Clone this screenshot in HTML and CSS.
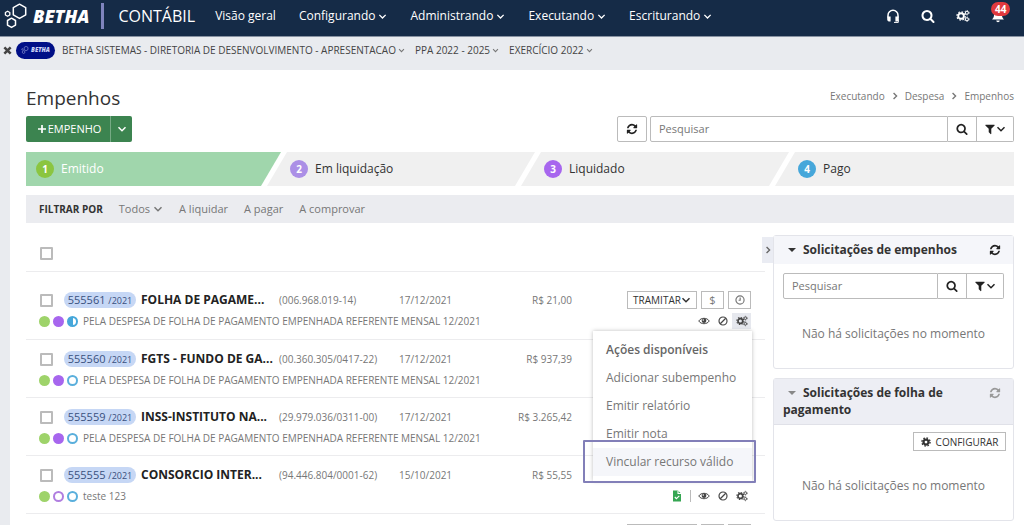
FILE: index.html
```html
<!DOCTYPE html>
<html lang="pt-BR">
<head>
<meta charset="utf-8">
<title>Empenhos</title>
<link rel="stylesheet" href="styles.css">
</head>
<body>
<svg class="sprite" aria-hidden="true">
  <symbol id="chevron" viewBox="0 0 10 10"><path d="M1.5 3.2 5 6.7 8.5 3.2" fill="none" stroke="currentColor" stroke-width="1.5"/></symbol>
  <symbol id="next" viewBox="0 0 10 10"><path d="M3.2 1.2 7 5 3.2 8.800" fill="none" stroke="currentColor" stroke-width="1.7"/></symbol>
  <symbol id="search" viewBox="0 0 1792 1792"><path fill="currentColor" d="M1216 832q0-185-131.500-316.500t-316.500-131.500-316.500 131.500-131.500 316.500 131.500 316.500 316.500 131.500 316.500-131.500 131.500-316.500zm512 832q0 52-38 90t-90 38q-54 0-90-38l-343-342q-179 124-399 124-143 0-273.500-55.500t-225-150-150-225-55.500-273.500 55.500-273.500 150-225 225-150 273.500-55.500 273.500 55.500 225 150 150 225 55.500 273.500q0 220-124 399l343 343q37 37 37 90z"/></symbol>
  <symbol id="refresh" viewBox="0 0 1792 1792"><path fill="currentColor" d="M1639 1056q0 5-1 7-64 268-268 434.500t-478 166.500q-146 0-282.500-55t-243.500-157l-129 129q-19 19-45 19t-45-19-19-45v-448q0-26 19-45t45-19h448q26 0 45 19t19 45-19 45l-137 137q71 66 161 102t187 36q134 0 250-65t186-179q11-17 53-117 8-23 30-23h192q13 0 22.500 9.500t9.500 22.500zm25-800v448q0 26-19 45t-45 19h-448q-26 0-45-19t-19-45 19-45l138-138q-148-137-349-137-134 0-250 65t-186 179q-11 17-53 117-8 23-30 23h-199q-13 0-22.500-9.500t-9.500-22.500v-7q65-268 270-434.500t480-166.500q146 0 284 55.500t245 156.500l130-129q19-19 45-19t45 19 19 45z"/></symbol>
  <symbol id="filter" viewBox="0 0 1792 1792"><path fill="currentColor" d="M1595 295q17 41-14 70l-493 493v742q0 42-39 59-13 5-25 5-27 0-45-19l-256-256q-19-19-19-45v-486l-493-493q-31-29-14-70 17-39 59-39h1280q42 0 59 39z"/></symbol>
  <symbol id="gears" viewBox="0 0 18 16"><g fill="none" stroke="currentColor"><circle cx="6.500" cy="8" r="3.600" stroke-width="2.400"/><circle cx="6.500" cy="8" r="5.300" stroke-width="1.600" stroke-dasharray="2.080 2.080"/><circle cx="14" cy="3.800" r="1.900" stroke-width="1.300"/><circle cx="14" cy="3.800" r="2.900" stroke-width="1" stroke-dasharray="1.520 1.520"/><circle cx="14" cy="12.200" r="1.900" stroke-width="1.300"/><circle cx="14" cy="12.200" r="2.900" stroke-width="1" stroke-dasharray="1.520 1.520"/></g></symbol>
  <symbol id="gear" viewBox="0 0 16 16"><g fill="none" stroke="currentColor"><circle cx="8" cy="8" r="4" stroke-width="3.600"/><circle cx="8" cy="8" r="6.500" stroke-width="2.200" stroke-dasharray="2.550 2.550"/></g></symbol>
  <symbol id="eye" viewBox="0 0 16 12"><path d="M1 6C4 1.200 12 1.200 15 6 12 10.800 4 10.800 1 6Z" fill="none" stroke="currentColor" stroke-width="1.300"/><circle cx="8" cy="5.500" r="3.100" fill="currentColor"/><circle cx="7" cy="4.500" r="1" fill="#fff"/></symbol>
  <symbol id="ban" viewBox="0 0 12 12"><g fill="none" stroke="currentColor" stroke-width="1.400"><circle cx="6" cy="6" r="4.800"/><path d="M9.300 2.700 2.700 9.300"/></g></symbol>
  <symbol id="clock" viewBox="0 0 12 12"><g fill="none" stroke="currentColor" stroke-width="1.400"><circle cx="6" cy="6" r="4.900"/><path d="M6.200 3v3.300H4.300"/></g></symbol>
  <symbol id="plus" viewBox="0 0 10 10"><path d="M5 1v8M1 5h8" stroke="currentColor" stroke-width="1.700"/></symbol>
  <symbol id="hexes" viewBox="0 0 24 26"><g fill="none" stroke="currentColor" stroke-linejoin="round"><path d="M15.500 1.200 21.700 4.600v7.200l-6.200 3.600-6.200-3.600V4.600Z" stroke-width="1.500"/><path d="M7.500 15.200l4 2.300v4.600l-4 2.300-4-2.300v-4.600Z" stroke-width="1.500"/><path d="M3.600 8.200l2.200 1.300V12l-2.200 1.300L1.400 12V9.500Z" stroke-width="1.300"/></g></symbol>
  <symbol id="headset" viewBox="0 0 14 14"><path d="M2 8.500V6.300a5 5 0 0 1 10 0v2.200" fill="none" stroke="currentColor" stroke-width="1.500"/><path d="M1.200 7.500h3.400v5H2.700Q1.200 12 1.200 10.500ZM12.800 7.500H9.400v5h1.900Q12.800 12 12.800 10.500Z" fill="currentColor"/><path d="M12.300 10.500v2.900H8" fill="none" stroke="currentColor" stroke-width="1"/></symbol>
  <symbol id="bell" viewBox="0 0 14 16"><path d="M7 1c3 0 4.500 2.300 4.500 5 0 4 1.500 4.800 2.200 6H.3C1 10.800 2.500 10 2.500 6 2.500 3.300 4 1 7 1ZM5 13h4a2 2 0 0 1-4 0Z" fill="currentColor"/></symbol>
  <symbol id="close" viewBox="0 0 10 10"><path d="m1.500 1.500 7 7m0-7-7 7" stroke="currentColor" stroke-width="2.800"/></symbol>
  <symbol id="filecheck" viewBox="0 0 10 12"><path d="M1 .5h5L9 3.500v8H1Z" fill="currentColor"/><path d="M6 .5v3h3M2.800 7l1.600 1.700L7.300 5.800" fill="none" stroke="#fff" stroke-width="1.100"/></symbol>
</svg>

<header class="topbar">
  <a class="brand" href="#"><svg class="brand-mark"><use href="#hexes"/></svg><span class="brand-name">BETHA</span></a>
  <span class="product">CONTÁBIL</span>
  <nav class="menu">
    <a href="#">Visão geral</a>
    <a href="#">Configurando <svg class="chev"><use href="#chevron"/></svg></a>
    <a href="#">Administrando <svg class="chev"><use href="#chevron"/></svg></a>
    <a href="#">Executando <svg class="chev"><use href="#chevron"/></svg></a>
    <a href="#">Escriturando <svg class="chev"><use href="#chevron"/></svg></a>
  </nav>
  <div class="tools">
    <button class="plain" aria-label="Suporte"><svg class="i14"><use href="#headset"/></svg></button>
    <button class="plain" aria-label="Buscar"><svg class="i14"><use href="#search"/></svg></button>
    <button class="plain" aria-label="Configurações"><svg class="i14"><use href="#gears"/></svg></button>
    <button class="plain bell" aria-label="Notificações"><svg class="i14"><use href="#bell"/></svg><span class="badge">44</span></button>
  </div>
</header>

<div class="context">
  <button class="plain" aria-label="Fechar"><svg class="i9"><use href="#close"/></svg></button>
  <span class="entity"><svg class="entity-mark"><use href="#hexes"/></svg>BETHA</span>
  <a class="first" href="#">BETHA SISTEMAS - DIRETORIA DE DESENVOLVIMENTO - APRESENTACAO<svg class="chev-sm"><use href="#chevron"/></svg></a>
  <a href="#">PPA 2022 - 2025<svg class="chev-sm"><use href="#chevron"/></svg></a>
  <a href="#">EXERCÍCIO 2022<svg class="chev-sm"><use href="#chevron"/></svg></a>
</div>

<main class="page">
  <div class="heading">
    <h1>Empenhos</h1>
    <nav class="crumbs">
      <a href="#">Executando</a><svg class="i8"><use href="#next"/></svg><a href="#">Despesa</a><svg class="i8"><use href="#next"/></svg><a href="#">Empenhos</a>
    </nav>
  </div>

  <div class="toolbar">
    <div class="split">
      <button class="new"><svg class="i10"><use href="#plus"/></svg>EMPENHO</button>
      <button class="new-more" aria-label="Mais opções"><svg class="i10"><use href="#chevron"/></svg></button>
    </div>
    <button class="box reload" aria-label="Atualizar"><svg class="i12"><use href="#refresh"/></svg></button>
    <div class="search">
      <input type="text" placeholder="Pesquisar" aria-label="Pesquisar">
      <button class="go" aria-label="Buscar"><svg class="i12"><use href="#search"/></svg></button>
      <button class="flt" aria-label="Filtrar"><svg class="i12"><use href="#filter"/></svg><svg class="i10"><use href="#chevron"/></svg></button>
    </div>
  </div>

  <ol class="steps">
    <li class="active"><span class="num n1">1</span>Emitido</li>
    <li><span class="num n2">2</span>Em liquidação</li>
    <li><span class="num n3">3</span>Liquidado</li>
    <li><span class="num n4">4</span>Pago</li>
  </ol>

  <div class="filters">
    <strong>FILTRAR POR</strong>
    <a href="#">Todos <svg class="i10"><use href="#chevron"/></svg></a>
    <a href="#">A liquidar</a>
    <a href="#">A pagar</a>
    <a href="#">A comprovar</a>
  </div>

  <div class="columns">
    <section class="list">
      <div class="select-all"><input type="checkbox" aria-label="Selecionar todos"></div>

      <article class="row opened">
        <div class="line">
          <input type="checkbox" aria-label="Selecionar 555561">
          <span class="pill">555561 <small>/2021</small></span>
          <strong class="name">FOLHA DE PAGAME...</strong>
          <span class="doc">(006.968.019-14)</span>
          <span class="date">17/12/2021</span>
          <span class="value">R$ 21,00</span>
          <div class="buttons"><button class="act wide">TRAMITAR<svg class="i10"><use href="#chevron"/></svg></button><button class="act">$</button><button class="act" aria-label="Histórico"><svg class="i10"><use href="#clock"/></svg></button></div>
        </div>
        <div class="line sub">
          <span class="dots"><i class="dot green"></i><i class="dot purple"></i><i class="dot half"></i></span>
          <span class="desc">PELA DESPESA DE FOLHA DE PAGAMENTO EMPENHADA REFERENTE MENSAL 12/2021</span>
          <div class="icons"><button class="plain" aria-label="Ver"><svg class="i12"><use href="#eye"/></svg></button><button class="plain" aria-label="Anular"><svg class="i10"><use href="#ban"/></svg></button><button class="plain on" aria-label="Ações"><svg class="i12"><use href="#gears"/></svg></button></div>
          <div class="dropdown">
            <h2>Ações disponíveis</h2>
            <a href="#">Adicionar subempenho</a>
            <a href="#">Emitir relatório</a>
            <a href="#">Emitir nota</a>
            <a class="current" href="#">Vincular recurso válido</a>
          </div>
        </div>
      </article>

      <article class="row">
        <div class="line">
          <input type="checkbox" aria-label="Selecionar 555560">
          <span class="pill">555560 <small>/2021</small></span>
          <strong class="name">FGTS - FUNDO DE GA...</strong>
          <span class="doc">(00.360.305/0417-22)</span>
          <span class="date">17/12/2021</span>
          <span class="value">R$ 937,39</span>
        </div>
        <div class="line sub">
          <span class="dots"><i class="dot green"></i><i class="dot purple"></i><i class="dot blue-o"></i></span>
          <span class="desc">PELA DESPESA DE FOLHA DE PAGAMENTO EMPENHADA REFERENTE MENSAL 12/2021</span>
        </div>
      </article>

      <article class="row">
        <div class="line">
          <input type="checkbox" aria-label="Selecionar 555559">
          <span class="pill">555559 <small>/2021</small></span>
          <strong class="name">INSS-INSTITUTO NA...</strong>
          <span class="doc">(29.979.036/0311-00)</span>
          <span class="date">17/12/2021</span>
          <span class="value">R$ 3.265,42</span>
        </div>
        <div class="line sub">
          <span class="dots"><i class="dot green"></i><i class="dot purple"></i><i class="dot blue-o"></i></span>
          <span class="desc">PELA DESPESA DE FOLHA DE PAGAMENTO EMPENHADA REFERENTE MENSAL 12/2021</span>
        </div>
      </article>

      <article class="row">
        <div class="line">
          <input type="checkbox" aria-label="Selecionar 555555">
          <span class="pill">555555 <small>/2021</small></span>
          <strong class="name">CONSORCIO INTER...</strong>
          <span class="doc">(94.446.804/0001-62)</span>
          <span class="date">15/10/2021</span>
          <span class="value">R$ 55,55</span>
        </div>
        <div class="line sub">
          <span class="dots"><i class="dot green"></i><i class="dot purple-o"></i><i class="dot blue-o"></i></span>
          <span class="desc">teste 123</span>
          <div class="icons"><button class="plain file" aria-label="Documento"><svg class="i12"><use href="#filecheck"/></svg></button><button class="plain" aria-label="Ver"><svg class="i12"><use href="#eye"/></svg></button><button class="plain" aria-label="Anular"><svg class="i10"><use href="#ban"/></svg></button><button class="plain gears" aria-label="Ações"><svg class="i12"><use href="#gears"/></svg></button></div>
        </div>
      </article>

      <article class="row">
        <div class="line">
          <div class="buttons"><button class="act wide" aria-label="Tramitar"></button><button class="act" aria-label="Pagar"></button><button class="act" aria-label="Histórico"></button></div>
        </div>
      </article>
    </section>

    <aside class="side">
      <button class="collapse" aria-label="Recolher"><svg class="i8"><use href="#next"/></svg></button>
      <section class="panel">
        <header>
          <h2><span class="tri"></span>Solicitações de empenhos</h2>
          <button class="plain" aria-label="Atualizar"><svg class="i12"><use href="#refresh"/></svg></button>
        </header>
        <div class="search">
          <input type="text" placeholder="Pesquisar" aria-label="Pesquisar solicitações">
          <button class="go" aria-label="Buscar"><svg class="i12"><use href="#search"/></svg></button>
          <button class="flt" aria-label="Filtrar"><svg class="i12"><use href="#filter"/></svg><svg class="i10"><use href="#chevron"/></svg></button>
        </div>
        <p>Não há solicitações no momento</p>
      </section>
      <section class="panel muted">
        <header>
          <h2><span class="tri"></span>Solicitações de folha de pagamento</h2>
          <button class="plain" aria-label="Atualizar"><svg class="i12"><use href="#refresh"/></svg></button>
        </header>
        <button class="config"><svg class="i10"><use href="#gear"/></svg>CONFIGURAR</button>
        <p>Não há solicitações no momento</p>
      </section>
    </aside>
  </div>
</main>
</body>
</html>
```
FILE: styles.css
```css
* { box-sizing: border-box; }
body {
  margin: 0;
  height: 100vh;
  overflow: hidden;
  display: flex;
  flex-direction: column;
  background: #e9ebef;
  color: #777;
  font: 12px/16px "Open Sans", "Noto Sans", sans-serif;
}
a { color: inherit; text-decoration: none; }
button, input { font: inherit; color: inherit; margin: 0; }
button { display: flex; align-items: center; justify-content: center; padding: 0; background: #fff; border: 1px solid #bbb; }
h1, h2, p, ol { margin: 0; padding: 0; }
svg { flex: none; display: block; }
.sprite { position: absolute; width: 0; height: 0; }
.plain { border: 0; background: none; }
.i8 { width: 8px; height: 8px; }
.i9 { width: 9px; height: 9px; }
.i10 { width: 10px; height: 10px; }
.i12 { width: 12px; height: 12px; }
.i14 { width: 14px; height: 14px; }

.topbar {
  flex: none;
  height: 37px;
  display: flex;
  align-items: center;
  padding: 0 19px 4px 4px;
  background: #152b47;
  border-bottom: 1px solid #8792a2;
  color: #fff;
}
.brand { display: flex; align-items: center; gap: 5px; }
.brand-mark { width: 24px; height: 26px; }
.brand-name { font-size: 18px; font-weight: 800; font-style: italic; }
.product {
  margin-left: 12px;
  padding-left: 14px;
  border-left: 3px solid #7f84bd;
  font-size: 16px;
  line-height: 26px;
}
.menu { display: flex; gap: 23px; margin-left: 20px; }
.menu a { display: flex; align-items: center; gap: 3px; }
.chev { width: 9px; height: 9px; }
.tools { display: flex; align-items: center; gap: 21px; margin-left: auto; }
.bell { position: relative; }
.badge {
  position: absolute;
  left: 0;
  top: -7px;
  padding: 0 4px;
  border-radius: 8px;
  background: #e0393e;
  font-size: 10px;
  line-height: 14px;
  font-weight: 700;
}

.context {
  flex: none;
  height: 33px;
  display: flex;
  align-items: center;
  padding: 0 3px 7px;
  color: #444;
  font-size: 10px;
}
.context a { display: flex; align-items: center; gap: 2px; margin-right: 10px; }
.context .first { margin-left: 7px; }
.chev-sm { width: 7px; height: 7px; color: #777; }
.entity {
  display: flex;
  align-items: center;
  justify-content: center;
  gap: 2px;
  width: 39px;
  height: 17px;
  margin-left: 4px;
  border-radius: 9px;
  background: #000f87;
  color: #cdd3f5;
  font-size: 6px;
  font-weight: 800;
  font-style: italic;
}
.entity-mark { width: 8px; height: 8px; }

.page { flex: 1; min-height: 0; margin-left: 10px; padding: 16px 10px 0 16px; background: #fff; }
.heading { display: flex; justify-content: space-between; height: 24px; }
h1 { color: #333; font-size: 19px; font-weight: 400; line-height: 24px; }
.crumbs { display: flex; align-items: center; gap: 6px; height: 20px; font-size: 10px; }

.toolbar { display: flex; height: 26px; margin-top: 6px; }
.split { display: flex; }
.new, .new-more { border: 0; background: #3c8450; color: #fff; }
.new { gap: 1px; width: 84px; padding-left: 2px; border-radius: 2px 0 0 2px; font-size: 11px; }
.new-more { width: 22px; border-left: 1px solid #76aa84; border-radius: 0 2px 2px 0; }
.box { border-radius: 2px; color: #222; }
.reload { width: 30px; margin: 0 3px 0 auto; }
.search { display: flex; height: 26px; width: 364px; color: #222; }
.search input { flex: 1; min-width: 0; padding: 0 8px; border: 1px solid #bbb; border-radius: 2px 0 0 2px; font-size: 11px; }
.search input::placeholder { color: #777; opacity: 1; }
.go { width: 29px; border-left: 0; }
.flt { width: 37px; border-left: 0; border-radius: 0 2px 2px 0; }

.steps { display: grid; grid-template-columns: 254fr 254fr 254fr 226fr; margin-top: 10px; list-style: none; color: #333; }
.steps li {
  display: flex;
  align-items: center;
  gap: 7px;
  height: 34px;
  margin: 0 -1px 0 -13px;
  padding-left: 23px;
  background: #f0f0f0;
  clip-path: polygon(20px 0, 100% 0, calc(100% - 20px) 100%, 0 100%);
}
.steps .active { margin-left: 0; padding-left: 10px; background: #a0d6ac; color: #fff; clip-path: polygon(0 0, 100% 0, calc(100% - 20px) 100%, 0 100%); }
.steps li:last-child { margin-right: 0; clip-path: polygon(20px 0, 100% 0, 100% 100%, 0 100%); }
.num { width: 18px; border-radius: 50%; color: #fff; font-size: 10px; font-weight: 700; line-height: 18px; text-align: center; }
.n1 { background: #8bc540; }
.n2 { background: #ab8fe6; }
.n3 { background: #a766ee; }
.n4 { background: #46a7da; }

.filters { display: flex; align-items: center; gap: 16px; height: 28px; margin-top: 9px; padding-left: 13px; background: #ebecf0; font-size: 11px; }
.filters strong { color: #333; font-size: 10px; }
.filters a { display: flex; align-items: center; gap: 3px; }

.columns { display: flex; gap: 8px; padding-top: 12px; }
.list { flex: 1; min-width: 0; }
.select-all { display: flex; align-items: center; height: 36px; padding-left: 14px; }
input[type="checkbox"] { appearance: none; flex: none; width: 13px; height: 13px; border: 2px solid #bbb; border-radius: 1px; background: #fff; }
.row { padding: 10px 14px 9px; border-top: 1px solid #ececee; }
.row.opened { padding: 19px 14px 10px; }
.line { display: flex; align-items: center; height: 18px; font-size: 11px; }
.line input { margin-right: 11px; }
.pill { flex: none; width: 72px; height: 16px; margin-right: 5px; border-radius: 8px; background: #c6d7f5; color: #38507d; line-height: 15px; text-align: center; white-space: nowrap; }
.pill small { font-size: 9px; }
.name { flex: none; width: 138px; color: #222; font-size: 12px; white-space: nowrap; }
.doc { flex: none; width: 120px; font-size: 10px; }
.date { flex: none; width: 80px; font-size: 10px; }
.value { width: 93px; font-size: 10px; text-align: right; }
.buttons { display: flex; gap: 4px; margin-left: auto; }
.act { width: 23px; height: 18px; font-size: 11px; }
.wide { width: 70px; color: #333; font-size: 10px; }
.line.sub { position: relative; height: 16px; margin-top: 4px; font-size: 10px; }
.dots { display: flex; gap: 3px; margin: 0 5px 0 -1px; }
.dot { width: 11px; height: 11px; border-radius: 50%; }
.green { background: #9ed36a; }
.purple { background: #a766ee; }
.purple-o { border: 2px solid #b07ee0; }
.blue-o { border: 2px solid #5aafdc; }
.half { border: 2px solid #46a7da; background: linear-gradient(90deg, #46a7da 50%, #fff 50%); }
.icons { display: flex; gap: 0; margin-left: auto; color: #444; }
.icons .plain { width: 19px; height: 16px; }
.icons .on { background: #e6e8ee; }
.icons .file { width: 21px; height: 12px; margin: 2px 3px 0 0; padding-right: 7px; color: #36a653; border-right: 1px solid #bbb; }

.dropdown {
  position: absolute;
  z-index: 2;
  top: 18px;
  right: -1px;
  width: 159px;
  padding: 5px 0;
  background: #fff;
  box-shadow: 0 0 4px #0004;
  color: #777;
  font-size: 12px;
  line-height: 28px;
}
.dropdown h2 { padding: 0 13px; color: #666; font-size: 12px; font-weight: 600; line-height: 28px; }
.dropdown a { display: block; padding: 0 13px; }
.dropdown .current { position: relative; background: #f5f6fa; }
.current::after { content: ""; position: absolute; inset: -8px -4px -7px -10px; border: 2px solid #827fb8; border-radius: 1px; }

.side { position: relative; flex: none; width: 241px; display: flex; flex-direction: column; gap: 9px; }
.collapse { position: absolute; left: -11px; top: 2px; width: 11px; height: 26px; border: 0; background: #eaecf3; color: #666; }
.panel { border: 1px solid #e3e4ea; border-radius: 3px; }
.panel header { display: flex; justify-content: space-between; align-items: flex-start; padding: 5px 12px 6px 9px; background: #f5f6fa; color: #222; }
.panel h2 { color: #333; font-size: 12px; line-height: 17px; font-weight: 700; }
.panel header .plain { height: 17px; }
.tri { display: inline-block; margin: 0 7px 2px 5px; border: 4px solid transparent; border-top-color: currentColor; border-bottom: 0; }
.panel .search { width: auto; margin: 9px; }
.panel p { padding: 18px 0 26px; text-align: center; }
.panel.muted header { background: #edeef4; border-bottom: 1px solid #e0e1e8; color: #999; }
.muted .tri { color: #888; }
.config { gap: 5px; width: 93px; height: 19px; margin: 7px 7px 0 auto; color: #333; font-size: 10px; }
.panel.muted p { padding: 27px 0 26px; }
```
